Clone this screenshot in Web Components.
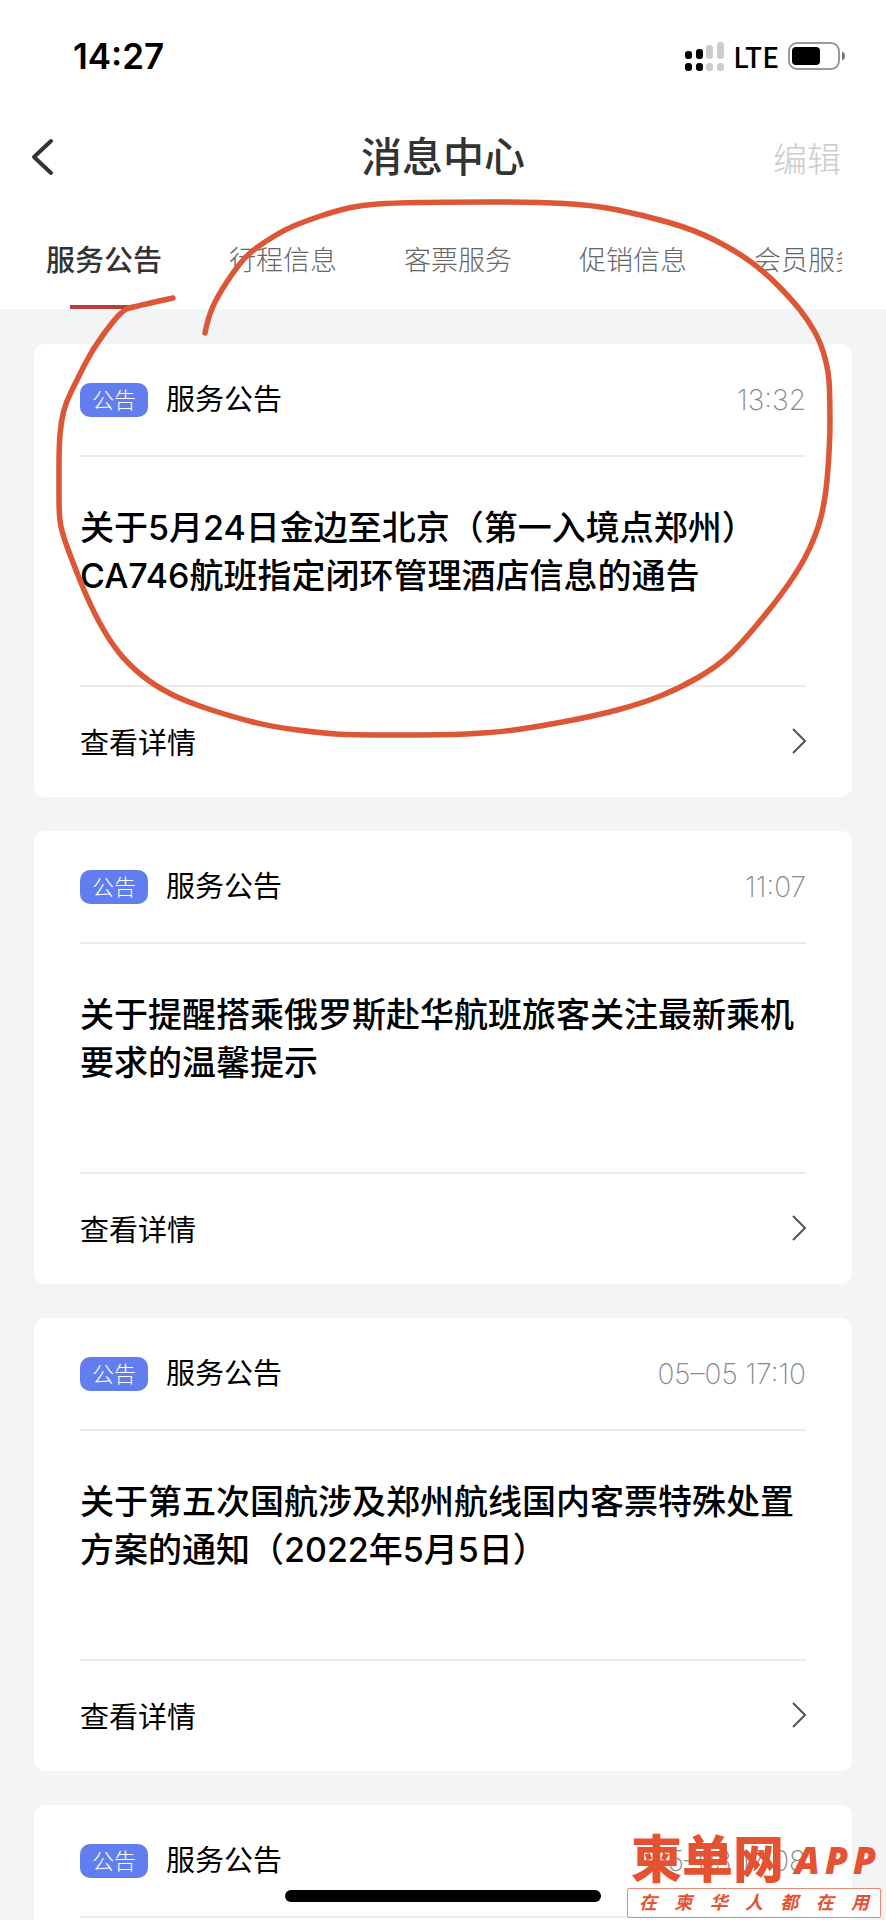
<!DOCTYPE html>
<html lang="zh-CN">
<head>
<meta charset="utf-8">
<meta name="viewport" content="width=device-width, initial-scale=1">
<title>消息中心</title>
<style>
  body { margin: 0; font-family: Inter, "Noto Sans CJK SC", sans-serif; color: #000; }
</style>
</head>
<body>
<message-center></message-center>

<script>
function define(name, html, setup) {
  const template = document.createElement('template');
  template.innerHTML = html;
  customElements.define(name, class extends HTMLElement {
    constructor() {
      super();
      this.attachShadow({ mode: 'open' }).append(template.content.cloneNode(true));
    }
    connectedCallback() { if (setup) setup(this, this.shadowRoot); }
  });
}

define('status-bar', `
  <style>
    :host { display: flex; align-items: center; justify-content: space-between; height: 112px; padding: 0 40px 0 73px; }
    .time { font-size: 35px; font-weight: 600; }
    .right { display: flex; align-items: center; gap: 9px; font: 500 28px/40px "Noto Sans CJK SC", sans-serif; }
    svg { display: block; }
  </style>
  <span class="time">14:27</span>
  <span class="right">
    <svg width="39" height="29" viewBox="0 0 39 29" aria-hidden="true">
      <g fill="#000"><rect y="9" width="7" height="8" rx="3"/><rect x="11" y="7" width="7" height="10" rx="3"/><rect y="21" width="7" height="8" rx="3"/><rect x="11" y="21" width="7" height="8" rx="3"/></g>
      <g fill="#ccc"><rect x="21" y="3" width="7" height="14" rx="3"/><rect x="32" width="7" height="17" rx="3"/><rect x="21" y="21" width="7" height="8" rx="3"/><rect x="32" y="21" width="7" height="8" rx="3"/></g>
    </svg>
    <span>LTE</span>
    <svg width="58" height="28" viewBox="0 0 58 28" aria-hidden="true">
      <rect x="1" y="1" width="50" height="26" rx="8" fill="none" stroke="#999" stroke-width="2"/>
      <rect x="4" y="5" width="28" height="18" rx="4"/>
      <path d="M54 9.500c4 1.500 4 7.500 0 9z" fill="#777"/>
    </svg>
  </span>`);

define('nav-bar', `
  <style>
    :host { display: grid; grid-template-columns: 1fr auto 1fr; align-items: center; height: 90px; padding: 0 45px 0 31px; }
    button { font: inherit; border: 0; background: none; padding: 0; }
    .back { justify-self: start; color: #333; }
    .edit { justify-self: end; font-size: 34px; font-weight: 300; color: #ccc; }
    h1 { margin: 0; padding-left: 14px; font-size: 41px; font-weight: 500; color: #333; line-height: 60px; }
    svg { display: block; }
  </style>
  <button class="back" aria-label="返回">
    <svg width="24" height="38" viewBox="0 0 24 38"><path d="M20 3L3 19L20 35" fill="none" stroke="currentColor" stroke-width="4" stroke-linecap="round" stroke-linejoin="round"/></svg>
  </button>
  <h1><slot></slot></h1>
  <button class="edit"><slot name="action"></slot></button>`);

define('tab-strip', `
  <style>
    :host { display: block; padding: 0 44px 0 46px; }
    nav { display: flex; gap: 67px; height: 107px; overflow: hidden; }
  </style>
  <nav><slot></slot></nav>`);

define('tab-item', `
  <style>
    :host { display: block; flex: none; }
    a { position: relative; display: block; height: 107px; line-height: 118px; font-size: 27px; font-weight: 300; color: #666; text-decoration: none; white-space: nowrap; }
    :host([active]) a { font-size: 29px; font-weight: 500; color: #333; }
    :host([active]) a::after { content: ""; position: absolute; left: 50%; bottom: 0; width: 68px; height: 4px; margin-left: -34px; background: #b83d37; }
  </style>
  <a href="#"><slot></slot></a>`);

define('notice-card', `
  <style>
    :host { display: block; flex: none; background: #fff; border-radius: 11px; padding: 0 46px; }
    header { display: flex; align-items: center; height: 111px; border-bottom: 2px solid #ebebed; }
    .badge { width: 68px; line-height: 34px; border-radius: 10px; background: #627eee; color: #fff; font-size: 22px; font-weight: 300; text-align: center; }
    .kind { margin-left: 18px; font-size: 29px; line-height: 44px; }
    time { margin-left: auto; font-size: 28px; font-weight: 200; color: #888; }
    h2 { margin: 0; box-sizing: border-box; min-height: 228px; padding: 47px 0; font-size: 34px; line-height: 48px; font-weight: 500; }
    a { display: flex; align-items: center; justify-content: space-between; height: 108px; padding-bottom: 2px; border-top: 2px solid #ebebed; color: inherit; text-decoration: none; font-size: 29px; }
    :host(:empty) a { display: none; }
    svg { display: block; }
  </style>
  <header><span class="badge">公告</span><span class="kind">服务公告</span><time></time></header>
  <h2><slot></slot></h2>
  <a href="#"><span>查看详情</span>
    <svg width="14" height="26" viewBox="0 0 14 26" aria-hidden="true"><path d="M1 1L13 13L1 25" fill="none" stroke="#555" stroke-width="2"/></svg>
  </a>`, (el, root) => { root.querySelector('time').textContent = el.getAttribute('time'); });

// Freehand marker stroke laid over the page, smoothed through the midpoints of its samples.
define('marker-stroke', `
  <style>
    :host { position: absolute; left: 0; top: 0; pointer-events: none; }
    svg { display: block; }
  </style>
  <svg width="886" height="760" viewBox="0 0 886 760" aria-hidden="true"><path fill="none" stroke="#dd5736" stroke-width="5.500" stroke-linecap="round" stroke-linejoin="round"/></svg>`,
  (el, root) => {
    const p = [[205,333],[208,318],[217,297],[236,268],[251,251],[282,231],[303,222],[335,211],[362,205],[393,203],[443,202],[536,202],[593,205],[643,215],[695,230],[736,251],[766,273],[793,301],[808,320],[821,343],[829,373],[830,405],[830,440],[826,497],[816,537],[793,580],[745,640],[718,666],[680,688],[643,703],[595,716],[530,728],[491,733],[443,735],[350,735],[322,733],[273,727],[233,717],[187,702],[155,686],[128,664],[109,640],[90,605],[73,563],[61,530],[59,511],[59,487],[59,447],[61,422],[66,402],[77,380],[92,350],[114,320],[124,310],[132,307],[173,298]];
    let d = `M${p[0]}`;
    for (let i = 1; i < p.length - 1; i++) {
      const end = i === p.length - 2 ? p[i + 1] : [(p[i][0] + p[i + 1][0]) / 2, (p[i][1] + p[i + 1][1]) / 2];
      d += `Q${p[i]} ${end}`;
    }
    root.querySelector('path').setAttribute('d', d);
  });

define('site-watermark', `
  <style>
    :host { position: absolute; right: 5px; bottom: 2px; width: 254px; color: #e55232; }
    .name { display: flex; align-items: center; justify-content: space-between; padding: 0 5px 0 4px; height: 56px; }
    .logo { font-size: 51px; line-height: 56px; font-weight: 900; }
    .app { display: flex; gap: 5px; font: italic 800 37px/56px "Open Sans", sans-serif; }
    .tag { display: flex; justify-content: space-between; box-sizing: border-box; height: 30px; padding: 0 11px; border: 1px solid #e58a75; border-radius: 2px; background: #ffffff99; font-size: 18px; line-height: 28px; font-weight: 700; font-style: italic; }
  </style>
  <div class="name"><span class="logo">柬单网</span><span class="app"><span>A</span><span>P</span><span>P</span></span></div>
  <div class="tag"><span>在</span><span>柬</span><span>华</span><span>人</span><span>都</span><span>在</span><span>用</span></div>`);

define('message-center', `
  <style>
    :host { position: relative; display: flex; flex-direction: column; height: 100vh; overflow: hidden; background: #f3f4f6; }
    .top { flex: none; background: #fff; }
    main { flex: 1; min-height: 0; overflow: auto; scrollbar-width: none; display: flex; flex-direction: column; gap: 34px; padding: 35px 34px; }
    .home { position: absolute; left: 50%; bottom: 18px; width: 316px; height: 12px; margin-left: -158px; border-radius: 6px; background: #000; }
  </style>
  <div class="top">
    <status-bar></status-bar>
    <nav-bar>消息中心<span slot="action">编辑</span></nav-bar>
    <tab-strip>
      <tab-item active>服务公告</tab-item>
      <tab-item>行程信息</tab-item>
      <tab-item>客票服务</tab-item>
      <tab-item>促销信息</tab-item>
      <tab-item>会员服务</tab-item>
    </tab-strip>
  </div>
  <main>
    <notice-card time="13:32">关于5月24日金边至北京（第一入境点郑州）CA746航班指定闭环管理酒店信息的通告</notice-card>
    <notice-card time="11:07">关于提醒搭乘俄罗斯赴华航班旅客关注最新乘机要求的温馨提示</notice-card>
    <notice-card time="05–05 17:10">关于第五次国航涉及郑州航线国内客票特殊处置方案的通知（2022年5月5日）</notice-card>
    <notice-card time="05–03 17:08"></notice-card>
  </main>
  <div class="home"></div>
  <marker-stroke></marker-stroke>
  <site-watermark></site-watermark>`);
</script>
</body>
</html>
